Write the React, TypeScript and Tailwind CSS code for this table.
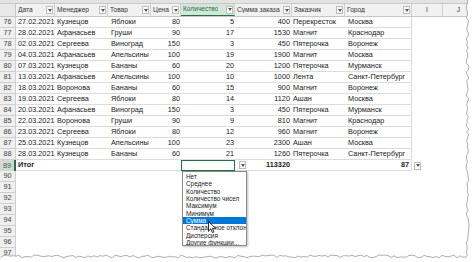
import React from 'react'

const FONT = "font-['Liberation_Sans',Arial,sans-serif]"
const COLS = 'grid grid-cols-[16px_39px_53px_43px_30px_54px_57px_53px_67px_31px_1fr]'

const ROWS = [
  ['76', '27.02.2021', 'Кузнецов', 'Яблоки', '80', '5', '400', 'Перекресток', 'Москва'],
  ['77', '28.02.2021', 'Афанасьев', 'Груши', '90', '17', '1530', 'Магнит', 'Краснодар'],
  ['78', '02.03.2021', 'Сергеева', 'Виноград', '150', '3', '450', 'Пятерочка', 'Воронеж'],
  ['79', '04.03.2021', 'Афанасьев', 'Апельсины', '100', '19', '1900', 'Магнит', 'Москва'],
  ['80', '07.03.2021', 'Кузнецов', 'Бананы', '60', '20', '1200', 'Пятерочка', 'Мурманск'],
  ['81', '13.03.2021', 'Афанасьев', 'Апельсины', '100', '10', '1000', 'Лента', 'Санкт-Петербург'],
  ['82', '18.03.2021', 'Воронова', 'Бананы', '60', '15', '900', 'Магнит', 'Воронеж'],
  ['83', '19.03.2021', 'Сергеева', 'Яблоки', '80', '14', '1120', 'Ашан', 'Москва'],
  ['84', '20.03.2021', 'Афанасьев', 'Виноград', '150', '3', '450', 'Пятерочка', 'Мурманск'],
  ['85', '22.03.2021', 'Воронова', 'Груши', '90', '9', '810', 'Магнит', 'Краснодар'],
  ['86', '23.03.2021', 'Сергеева', 'Яблоки', '80', '12', '960', 'Магнит', 'Воронеж'],
  ['87', '25.03.2021', 'Кузнецов', 'Апельсины', '100', '23', '2300', 'Ашан', 'Москва'],
  ['88', '28.03.2021', 'Кузнецов', 'Бананы', '60', '21', '1260', 'Пятерочка', 'Санкт-Петербург'],
]

const HEADERS = ['Дата', 'Менеджер', 'Товар', 'Цена', 'Количество', 'Сумма заказа', 'Заказчик', 'Город']

const MENU = ['Нет', 'Среднее', 'Количество', 'Количество чисел', 'Максимум', 'Минимум', 'Сумма', 'Стандартное отклон', 'Дисперсия', 'Другие функции...']

function FilterBtn() {
  return (
    <span className="flex h-[8px] w-[7px] shrink-0 items-center justify-center border border-[#bcbcbc] bg-white">
      <svg width="4" height="3" viewBox="0 0 4 3"><path d="M0 0h4L2 3z" fill="#555" /></svg>
    </span>
  )
}

// torn paper edge along right and bottom
function tornPath() {
  let seed = 7
  const rnd = () => { seed = (seed * 9301 + 49297) % 233280; return seed / 233280 }
  const pts: string[] = []
  for (let y = 0; y <= 256; y += 3) pts.push(`${(466 + rnd() * 3).toFixed(1)},${y}`)
  for (let x = 466; x >= 0; x -= 3) pts.push(`${x},${(255 + rnd() * 3).toFixed(1)}`)
  return pts
}

export default function App() {
  const pts = tornPath()
  const line = 'M' + pts.join(' L')
  const fill = line + ' L0,262 L474,262 L474,0 Z'

  return (
    <div className={`relative h-[262px] w-[474px] overflow-hidden bg-white text-[7.3px] leading-none text-[#222] ${FONT}`}>
      <div className="h-[4px] border-b border-[#c8c8c8] bg-[#e3e3e3]" />

      {/* column header row, table headers replace letters */}
      <div className={`${COLS} h-[13px] border-b border-[#c6c6c6] bg-[#f1f1f1] text-[6.6px] text-[#333]`}>
        <div className="border-r border-[#c6c6c6] bg-[#e9e9e9]" />
        {HEADERS.map((h, i) => (
          <div key={h} className={`flex items-center justify-between gap-[1px] overflow-hidden border-r border-[#d0d0d0] pl-[2px] pr-[1px] ${i === 4 ? 'border-b border-b-[#217346] bg-[#d3e6d9] text-[#2a6e45]' : ''}`}>
            <span className="overflow-hidden whitespace-nowrap">{h}</span>
            <FilterBtn />
          </div>
        ))}
        <div className="flex items-center justify-center border-r border-[#d0d0d0]">I</div>
        <div className="flex items-center justify-center">J</div>
      </div>

      {ROWS.map(r => (
        <div key={r[0]} className={`${COLS} h-[11px]`}>
          <div className="flex items-center justify-center border-b border-r border-[#cfcfcf] bg-[#efefef] text-[#444]">{r[0]}</div>
          <div className="flex items-center border-b border-[#dcdcdc] pl-[2px]">{r[1]}</div>
          <div className="flex items-center border-b border-[#dcdcdc] pl-[2px]">{r[2]}</div>
          <div className="flex items-center border-b border-[#dcdcdc] pl-[3px]">{r[3]}</div>
          <div className="flex items-center justify-end border-b border-[#dcdcdc] pr-[1px]">{r[4]}</div>
          <div className="flex items-center justify-end border-b border-[#dcdcdc] pr-[1px]">{r[5]}</div>
          <div className="flex items-center justify-end border-b border-[#dcdcdc] pr-[2px]">{r[6]}</div>
          <div className="flex items-center border-b border-[#dcdcdc] pl-[1px]">{r[7]}</div>
          <div className="flex items-center border-b border-r border-[#dcdcdc] pl-[3px]">{r[8]}</div>
          <div />
          <div />
        </div>
      ))}

      {/* total row */}
      <div className={`${COLS} h-[11px] font-bold`}>
        <div className="flex items-center justify-center border-r-2 border-[#217346] bg-[#d6d6d6] font-normal text-[#217346]">89</div>
        <div className="flex items-center border-b border-[#dcdcdc] pl-[2px]">Итог</div>
        <div className="border-b border-[#dcdcdc]" />
        <div className="border-b border-[#dcdcdc]" />
        <div className="border-b border-[#dcdcdc]" />
        <div className="border border-[#217346] bg-white" />
        <div className="flex items-center justify-between border-b border-[#dcdcdc] pl-[4px] pr-[2px]">
          <FilterBtn />
          <span>113320</span>
        </div>
        <div className="border-b border-[#dcdcdc]" />
        <div className="flex items-center justify-end border-b border-r border-[#dcdcdc] pr-[2px]">87</div>
        <div className="flex items-center pl-[2px]"><FilterBtn /></div>
        <div />
      </div>

      {['90', '91', '92', '93', '94', '95', '96', '97'].map(n => (
        <div key={n} className={`${COLS} h-[11px]`}>
          <div className="flex items-center justify-center border-b border-r border-[#cfcfcf] bg-[#efefef] text-[#444]">{n}</div>
        </div>
      ))}

      {/* aggregate function dropdown */}
      <div className="absolute left-[182px] top-[171px] h-[75px] w-[65px] overflow-hidden border border-[#8a8a8a] bg-white pt-[1px] text-[6.4px] text-[#222] shadow-[1px_1px_2px_rgba(0,0,0,0.25)]">
        {MENU.map(m => (
          <div key={m} className={`h-[7.35px] overflow-hidden whitespace-nowrap pl-[3px] leading-[7.35px] ${m === 'Сумма' ? 'bg-[#0078d7] text-white' : ''}`}>{m}</div>
        ))}
      </div>

      {/* mouse pointer */}
      <svg className="absolute left-[208px] top-[221px]" width="9" height="13" viewBox="0 0 9 13">
        <path d="M0.5 0.5 L0.5 10 L2.8 7.8 L4.4 11.6 L5.9 11 L4.4 7.3 L7.6 7.3 Z" fill="#fff" stroke="#000" strokeWidth="0.8" strokeLinejoin="round" />
      </svg>

      {/* torn edge */}
      <svg className="absolute inset-0" width="474" height="262" viewBox="0 0 474 262">
        <path d={fill} fill="#fff" />
        <path d={line} fill="none" stroke="#9b9b9b" strokeWidth="0.8" />
      </svg>
    </div>
  )
}
